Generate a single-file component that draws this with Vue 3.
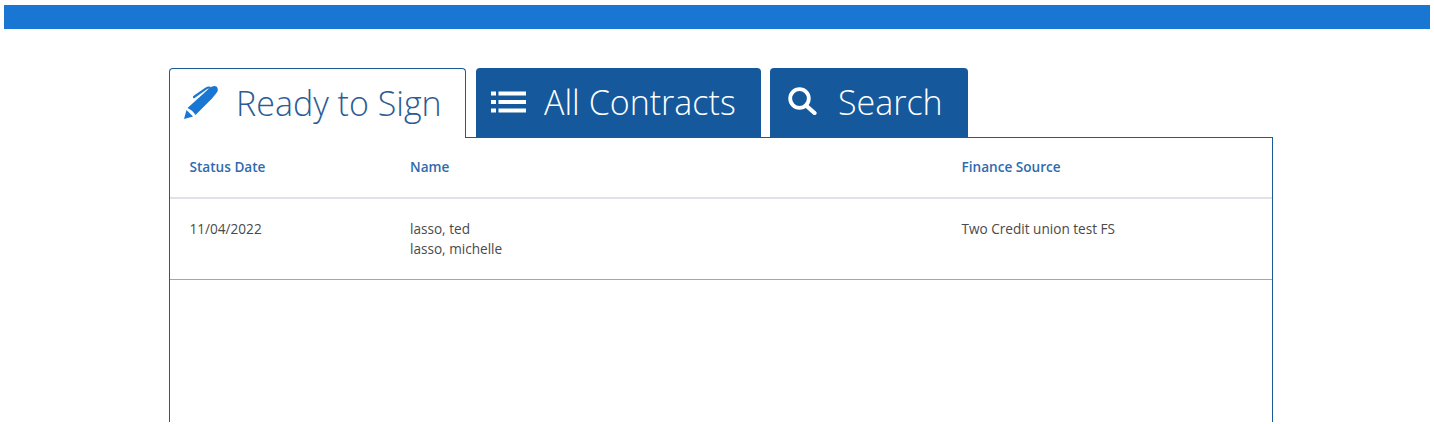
<script setup>
const rows = [
  { date: '11/04/2022', names: ['lasso, ted', 'lasso, michelle'], source: 'Two Credit union test FS' }
]
</script>

<template>
  <div class="page">
    <div class="topbar"></div>
    <div class="content">
      <nav class="tabs">
        <div class="tab active">
          <svg class="icon pen" viewBox="0 0 34 34">
            <path d="M0 34 L2.500 25 L9 31.500 Z" fill="#1976d2" />
            <path d="M3.500 23 L19 9 L26 2.500 Q29.500 0 32.500 1.500 Q35 4.500 32.800 7.500 L28 13.500 L11.500 30 Q9 25.500 3.500 23 Z" fill="#1976d2" />
            <path d="M10 12 L21.500 3.800 Q23.500 2.500 25.500 2.500" fill="none" stroke="#1976d2" stroke-width="2.200" stroke-linecap="round" />
          </svg>
          <span>Ready to Sign</span>
        </div>
        <div class="tab list-tab">
          <svg class="icon list" viewBox="0 0 35 22">
            <path d="M0 .500h5v4H0zM7.500 .500H35v4H7.500zM0 9h5v4H0zM7.500 9H35v4H7.500zM0 17.500h5v4H0zM7.500 17.500H35v4H7.500z" fill="#fff" />
          </svg>
          <span>All Contracts</span>
        </div>
        <div class="tab search-tab">
          <svg class="icon search" viewBox="0 0 29 29">
            <circle cx="11.500" cy="12.500" r="9.300" fill="none" stroke="#fff" stroke-width="3.800" />
            <path d="M18 19.500 L26.500 27" stroke="#fff" stroke-width="4.200" stroke-linecap="round" />
          </svg>
          <span>Search</span>
        </div>
      </nav>
      <section class="panel">
        <div class="row head">
          <div>Status Date</div>
          <div>Name</div>
          <div>Finance Source</div>
        </div>
        <div v-for="r in rows" :key="r.date" class="row body">
          <div>{{ r.date }}</div>
          <div><div v-for="n in r.names" :key="n">{{ n }}</div></div>
          <div>{{ r.source }}</div>
        </div>
      </section>
    </div>
  </div>
</template>

<style>
html, body { margin: 0; background: #fff; overflow: hidden; }
</style>

<style scoped>
.page {
  height: 424px;
  box-sizing: border-box;
  padding: 5px 4px 0;
  font-family: "Open Sans", sans-serif;
  overflow: hidden;
}
.topbar { height: 24px; background: #1976d2; }
.content { margin: 39px 0 0 165px; width: 1104px; }
.tabs { display: flex; height: 69px; position: relative; z-index: 1; }
.tab {
  box-sizing: border-box;
  height: 69px;
  display: flex;
  align-items: center;
  border-radius: 4px 4px 0 0;
  background: #15589b;
  color: #fff;
  font-size: 34px;
  font-weight: 300;
  white-space: nowrap;
  margin-right: 9px;
}
.tab span { position: relative; top: -1px; }
.tab.active {
  width: 297px;
  height: 70px;
  background: #fff;
  color: #2c5c94;
  border: 1px solid #1c5a96;
  border-bottom: 0;
  padding-left: 14px;
  margin-right: 10px;
}
.list-tab { width: 285px; padding-left: 15px; }
.search-tab { width: 198px; padding-left: 18px; }
.icon { flex: none; }
.pen { width: 34px; height: 34px; margin-right: 18px; position: relative; top: -2px; }
.list { width: 35px; height: 22px; margin-right: 18px; position: relative; top: -1px; }
.search { width: 29px; height: 29px; margin-right: 21px; position: relative; top: -2px; }
.panel {
  box-sizing: border-box;
  height: 285px;
  border: 1px solid #1c5a96;
  border-bottom: 0;
  background: #fff;
  color: #4a4a4a;
  font-size: 13.600px;
}
.row { display: grid; grid-template-columns: 220.500px 551.500px 1fr; padding-left: 19.500px; }
.head {
  box-sizing: border-box;
  height: 61px;
  padding-bottom: 3px;
  align-items: center;
  border-bottom: 2px solid #dfe3e8;
  color: #2f6aae;
  font-weight: 600;
}
.body {
  box-sizing: border-box;
  height: 81px;
  padding-top: 20px;
  line-height: 20px;
  border-bottom: 1px solid #98a9b8;
}
</style>
